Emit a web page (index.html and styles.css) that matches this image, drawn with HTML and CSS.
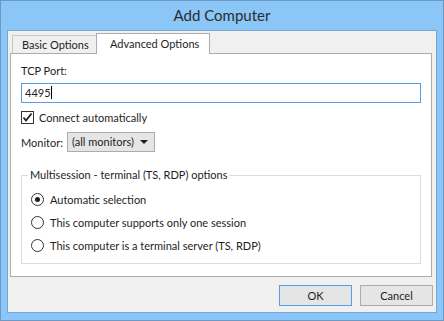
FILE: index.html
```html
<!DOCTYPE html>
<html lang="en">
<head>
    <meta charset="UTF-8">
    <title>Add Computer</title>
    <link rel="stylesheet" href="styles.css">
</head>
<body>
    <div class="window">
        <div class="titlebar">Add Computer</div>
        <div class="client">
            <div class="tabs">
                <div class="tab">Basic Options</div>
                <div class="tab active">Advanced Options</div>
            </div>
            <div class="panel">
                <div class="label">TCP Port:</div>
                <div class="input">4495<span class="caret"></span></div>
                <div class="check-row">
                    <span class="checkbox">
                        <svg width="11" height="11" viewBox="0 0 11 11"><path d="M1.5 5.5 L4 8.5 L9.5 1.5" fill="none" stroke="#222" stroke-width="1.8"/></svg>
                    </span>
                    Connect automatically
                </div>
                <div class="monitor-row">
                    <span class="monitor-label">Monitor:</span>
                    <div class="select">(all monitors)<span class="arrow"></span></div>
                </div>
                <div class="group">
                    <div class="legend">Multisession - terminal (TS, RDP) options</div>
                    <div class="radio-row"><span class="radio checked"></span>Automatic selection</div>
                    <div class="radio-row"><span class="radio"></span>This computer supports only one session</div>
                    <div class="radio-row"><span class="radio"></span>This computer is a terminal server (TS, RDP)</div>
                </div>
            </div>
            <div class="buttons">
                <div class="btn default">OK</div>
                <div class="btn">Cancel</div>
            </div>
        </div>
    </div>
</body>
</html>
```

FILE: styles.css
```css
body {
    margin: 0;
    font-family: Lato, "Open Sans", sans-serif;
    font-size: 11px;
    color: #1e1e1e;
}
.window {
    width: 444px;
    height: 321px;
    box-sizing: border-box;
    background-color: #8bc6f8;
    border: 1px solid #6f98c0;
    display: flex;
    flex-direction: column;
}
.titlebar {
    height: 29px;
    line-height: 29px;
    text-align: center;
    font-size: 15px;
    color: #2b2b2b;
}
.client {
    margin: 0 6px 7px 6px;
    flex: 1;
    background-color: #f0f0f0;
    border: 1px solid #78a6d0;
    padding: 2px 4px 0 2px;
    display: flex;
    flex-direction: column;
}
.tabs {
    display: flex;
    height: 20px;
    align-items: flex-end;
    padding-left: 2px;
    position: relative;
    z-index: 1;
    white-space: nowrap;
}
.tab {
    height: 18px;
    line-height: 18px;
    padding: 0 9px;
    border: 1px solid #c8c8c8;
    border-bottom: none;
    background-color: #f0f0f0;
    box-sizing: border-box;
    width: 85px;
}
.tab.active {
    height: 21px;
    margin-bottom: -1px;
    width: 114px;
    margin-left: -1px;
    background-color: #fff;
    border-color: #acacac;
    line-height: 20px;
    padding-left: 13px;
}
.panel {
    background-color: #fff;
    border: 1px solid #acacac;
    height: 224px;
    box-sizing: border-box;
    padding: 8px 10px 0 10px;
}
.label {
    height: 17px;
    line-height: 17px;
}
.input {
    margin-top: 4px;
    height: 20px;
    box-sizing: border-box;
    border: 1px solid #569de5;
    line-height: 18px;
    padding-left: 3px;
}
.caret {
    display: inline-block;
    width: 1px;
    height: 13px;
    background-color: #000;
    vertical-align: -2px;
}
.check-row {
    display: flex;
    align-items: center;
    margin-top: 7px;
    height: 15px;
}
.checkbox {
    width: 13px;
    height: 13px;
    box-sizing: border-box;
    border: 1px solid #333;
    display: flex;
    align-items: center;
    justify-content: center;
    margin-right: 5px;
}
.monitor-row {
    display: flex;
    align-items: center;
    margin-top: 7px;
    white-space: nowrap;
}
.monitor-label {
    width: 46px;
}
.select {
    width: 88px;
    height: 20px;
    box-sizing: border-box;
    border: 1px solid #acacac;
    background-color: #e5e5e5;
    line-height: 18px;
    padding-left: 4px;
    position: relative;
}
.arrow {
    position: absolute;
    right: 6px;
    top: 7px;
    border-left: 4px solid transparent;
    border-right: 4px solid transparent;
    border-top: 4px solid #1e1e1e;
}
.group {
    margin-top: 23px;
    padding: 12px 0 0 9px;
    border: 1px solid #dcdcdc;
    height: 89px;
    box-sizing: border-box;
    position: relative;
}
.legend {
    position: absolute;
    top: -9px;
    left: 6px;
    padding: 0 2px;
    background-color: #fff;
    line-height: 16px;
}
.radio-row {
    display: flex;
    align-items: center;
    height: 23px;
}
.radio {
    width: 13px;
    height: 13px;
    box-sizing: border-box;
    border: 1px solid #333;
    border-radius: 50%;
    margin-right: 6px;
    display: flex;
    align-items: center;
    justify-content: center;
}
.radio.checked::after {
    content: "";
    width: 5px;
    height: 5px;
    border-radius: 50%;
    background-color: #1e1e1e;
}
.buttons {
    display: flex;
    justify-content: flex-end;
    gap: 8px;
    margin: 8px -1px 0 0;
}
.btn {
    width: 73px;
    height: 21px;
    box-sizing: border-box;
    border: 1px solid #acacac;
    background-color: #e5e5e5;
    text-align: center;
    line-height: 19px;
}
.btn.default {
    border-color: #569de5;
}
```
